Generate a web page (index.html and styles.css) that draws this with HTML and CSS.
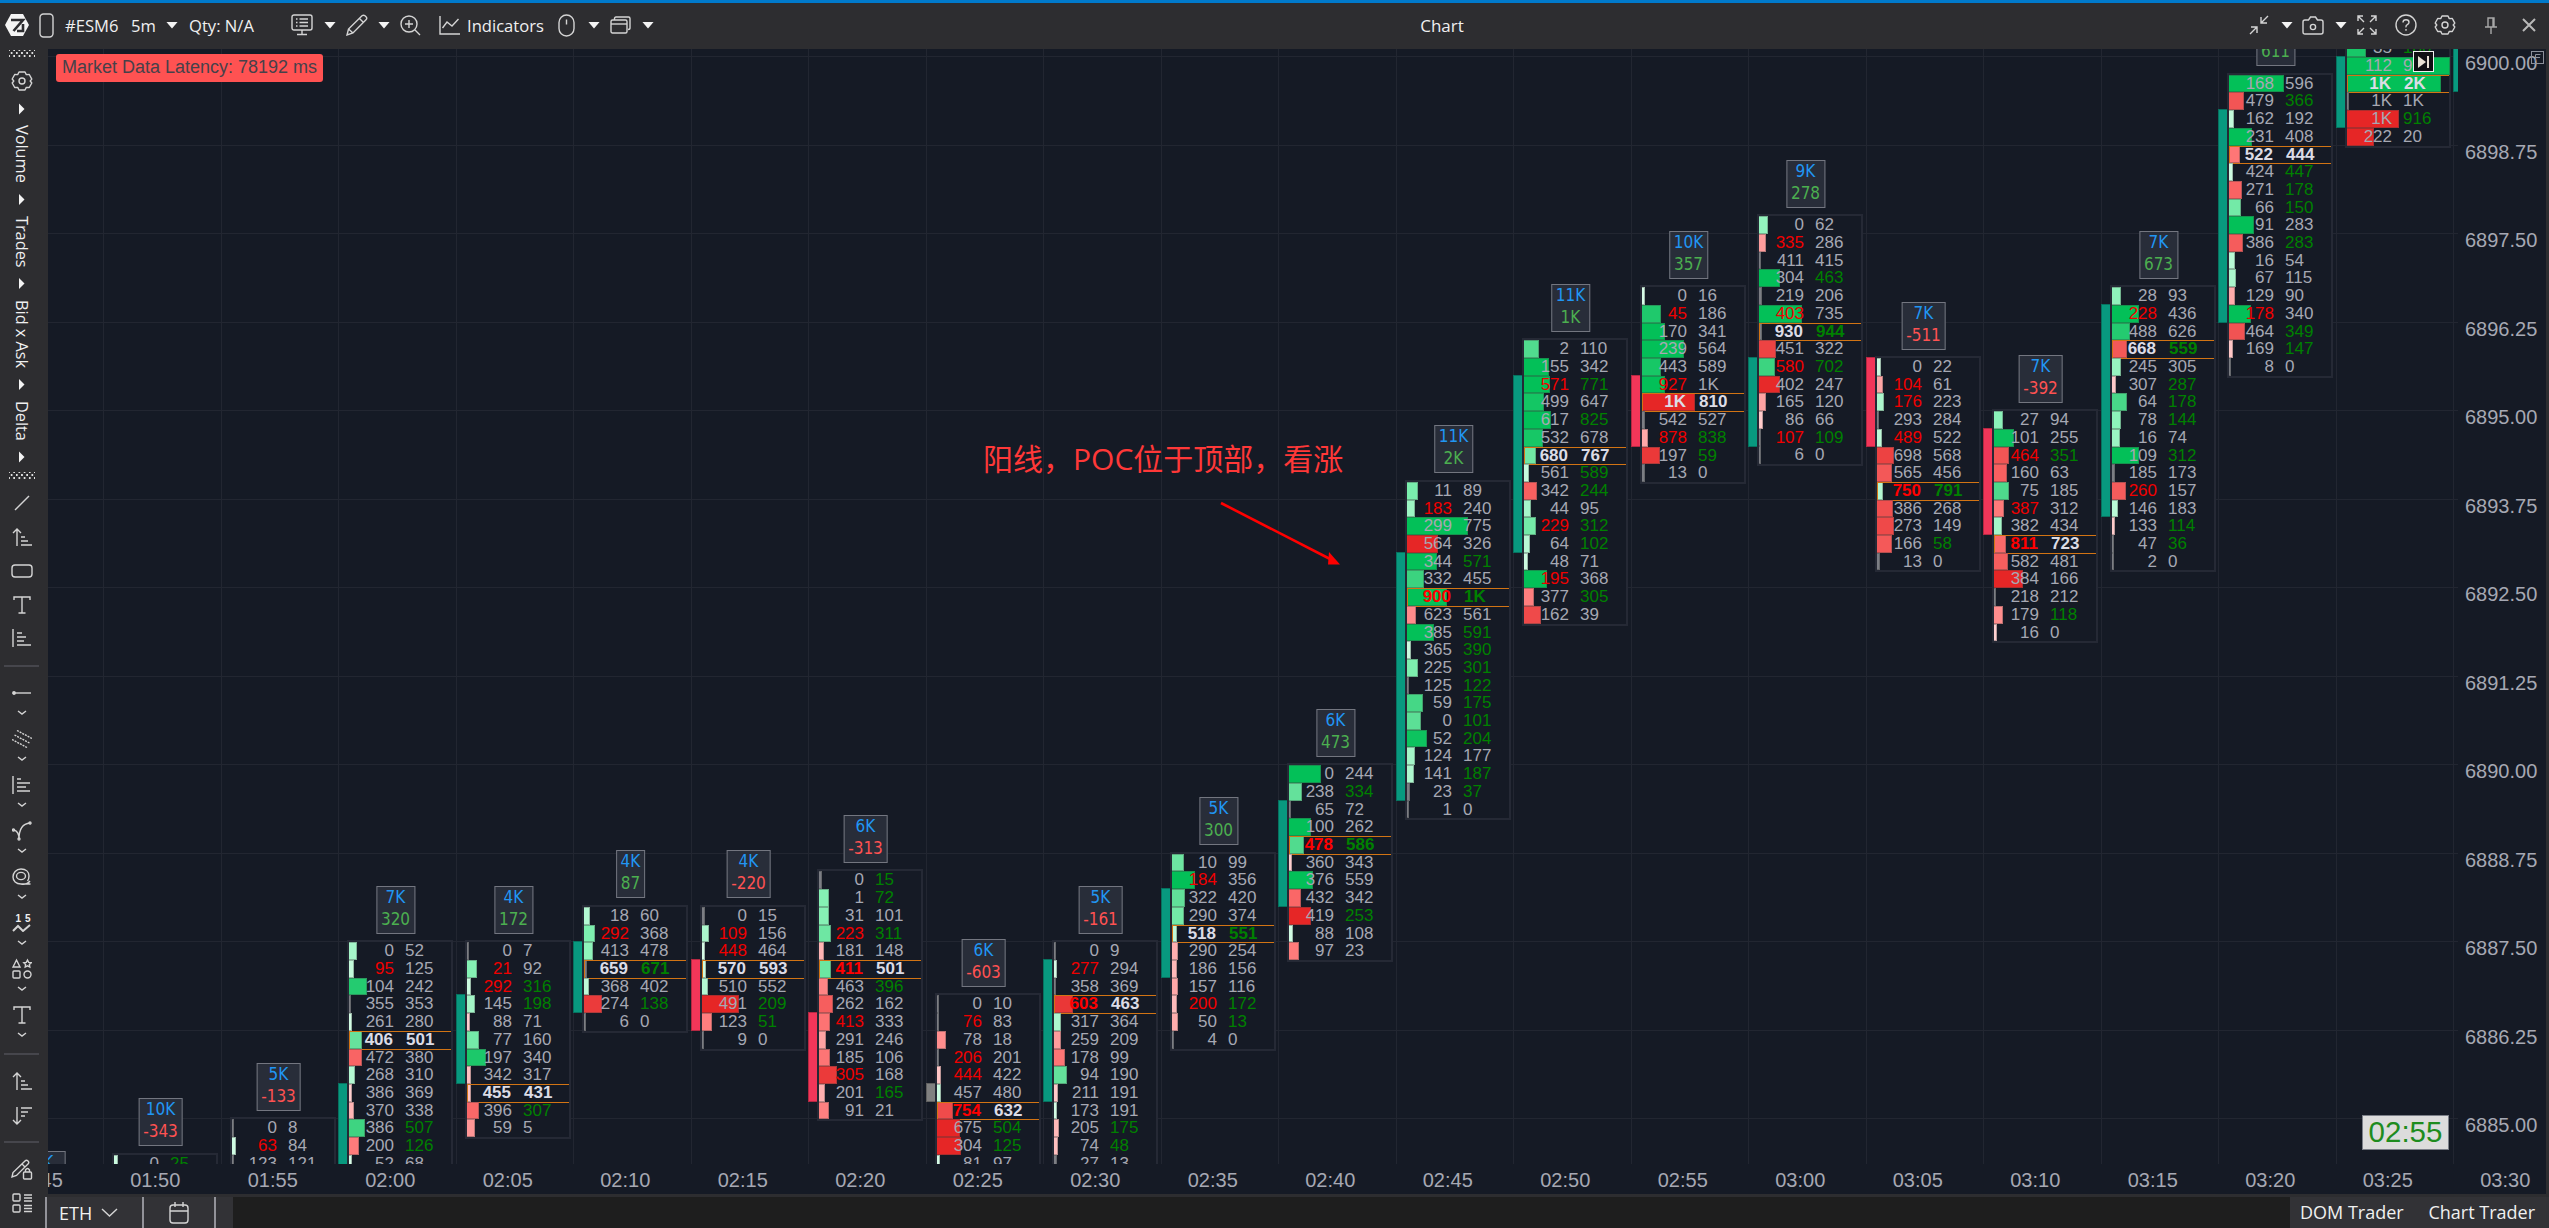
FILE: index.html
```html
<!DOCTYPE html>
<html lang="en">
<head>
  <meta charset="UTF-8">
  <meta name="viewport" content="width=device-width, initial-scale=1.0">
  <title>Chart</title>
  <link rel="stylesheet" href="styles.css">
</head>
<body>
  <!-- Top toolbar -->
  <header class="toolbar">
    <div class="toolbar-left">
      <svg class="logo" width="24" height="24" viewBox="0 0 24 24"><path d="M6 1h12l6 11-6 11H6L0 12z" fill="#f4f4f4"/><path d="M6 7h12L8.500 18M12 18h6v-7" fill="none" stroke="#2d2d30" stroke-width="2.600"/></svg>
      <svg class="phone" width="15" height="25" viewBox="0 0 15 25"><rect x="1" y="1" width="13" height="23" rx="3.500"/></svg>
      <span class="symbol">#ESM6</span>
      <span class="period">5m</span>
      <i class="caret"></i>
      <span class="qty">Qty: N/A</span>
      <svg class="monitor" width="22" height="22" viewBox="0 0 22 22"><rect x="1" y="1" width="20" height="15" rx="2"/><path d="M11 16v4M6 20.500h10M5 5h1.500M5 8.500h1.500M5 12h1.500M8.500 5H17M8.500 8.500H17M8.500 12H17"/></svg>
      <i class="caret"></i>
      <svg class="pencil" width="22" height="22" viewBox="0 0 22 22"><path d="M1 21l1.500-6L16 1.800q1.500-1.300 3 0l1 1q1.500 1.500 0 3L7 19zM13.500 4.500l4 4M2.500 15l4.500 4"/></svg>
      <i class="caret"></i>
      <svg class="lens" width="21" height="21" viewBox="0 0 21 21"><circle cx="9" cy="9" r="8"/><path d="M15 15l5 5M9 5v8M5 9h8"/></svg>
      <svg class="ind" width="21" height="20" viewBox="0 0 21 20"><path d="M1 1v18h20M3.500 13l4.500-6 5 4 6.500-7"/></svg>
      <span class="indicators">Indicators</span>
      <svg class="mouse" width="17" height="23" viewBox="0 0 17 23"><rect x="1" y="1" width="15" height="21" rx="7.500"/><path d="M8.500 5.500v5"/></svg>
      <i class="caret"></i>
      <svg class="windows" width="21" height="18" viewBox="0 0 21 18"><path d="M4.500 4V2.500Q4.500 1 6 1h12.500Q20 1 20 2.500V12q0 1.500-2 1.500"/><rect x="1" y="4" width="16" height="13" rx="1.500"/><path d="M1 8h16"/></svg>
      <i class="caret"></i>
    </div>
    <h1 class="title">Chart</h1>
    <div class="toolbar-right">
      <svg class="shrink" width="20" height="20" viewBox="0 0 20 20"><path d="M19 1l-7 7M12 2v6h6M1 19l7-7M2 12h6v6"/></svg>
      <i class="caret"></i>
      <svg class="camera" width="22" height="19" viewBox="0 0 22 19"><path d="M3 4h3.500L8.500 1h5l2 3H19q2 0 2 2v10q0 2-2 2H3q-2 0-2-2V6q0-2 2-2z"/><circle cx="11" cy="11" r="2.600"/></svg>
      <i class="caret"></i>
      <svg class="expand" width="20" height="20" viewBox="0 0 20 20"><path d="M1 6V1h5M1 1l6 6M14 1h5v5M19 1l-6 6M1 14v5h5M1 19l6-6M14 19h5v-5M19 19l-6-6"/></svg>
      <svg class="help" width="22" height="22" viewBox="0 0 22 22"><circle cx="11" cy="11" r="10"/><path d="M8 8.500Q8 5.800 11 5.800t3 2.500q0 1.500-1.700 2.400T11 13.300M11 15v1.800"/></svg>
      <svg class="gear" width="22" height="22" viewBox="0 0 22 22"><path d="M8 2h6l1.300 2.600 3-.1 2.500 4.600L19.200 11l1.600 2-2.500 4.500-3-.1L14 20H8l-1.300-2.600-3 .1L1.200 13l1.600-2-1.600-2 2.500-4.500 3 .1z" stroke-linejoin="round"/><circle cx="11" cy="11" r="3"/></svg>
      <svg class="pin" width="12" height="17" viewBox="0 0 12 17"><path d="M3 1h6v9H3zM0 10h12M6 10v7M8 1v9"/></svg>
      <svg class="close" width="14" height="14" viewBox="0 0 14 14"><path d="M1 1l12 12M13 1L1 13"/></svg>
    </div>
  </header>

  <div class="workspace">
    <!-- Drawing tools -->
    <nav class="sidebar">
      <div class="slot dots"><span class="dot-grid"></span></div>
      <div class="slot cog"><svg width="22" height="22" viewBox="0 0 22 22"><path d="M8 2h6l1.300 2.600 3-.1 2.500 4.600L19.200 11l1.600 2-2.500 4.500-3-.1L14 20H8l-1.300-2.600-3 .1L1.200 13l1.600-2-1.600-2 2.500-4.500 3 .1z" stroke-linejoin="round"/><circle cx="11" cy="11" r="3"/></svg></div>
      <div class="modes">
        <i class="tri"></i><span>Volume</span>
        <i class="tri"></i><span>Trades</span>
        <i class="tri"></i><span>Bid x Ask</span>
        <i class="tri"></i><span>Delta</span>
        <i class="tri"></i>
      </div>
      <div class="slot dots-low"><span class="dot-grid"></span></div>
      <div class="slot t-line"><svg width="16" height="16" viewBox="0 0 16 16"><path d="M1 15L15 1"/></svg></div>
      <div class="slot t-up"><svg width="20" height="19" viewBox="0 0 20 19"><path d="M5 18V1M1 5l4-4 4 4M9 9h4M9 13h7M9 17h11"/></svg></div>
      <div class="slot t-rect"><svg width="22" height="14" viewBox="0 0 22 14"><rect x="1" y="1" width="20" height="12" rx="3"/></svg></div>
      <div class="slot t-text"><svg width="18" height="18" viewBox="0 0 18 18"><path d="M1 4V1h16v3M9 1v16M5.500 17h7"/></svg></div>
      <div class="slot t-list"><svg width="19" height="18" viewBox="0 0 19 18"><path d="M1 0v18M5 4h5M5 8h9M5 12h7M5 16h14"/></svg></div>
      <hr class="sep">
      <div class="tool"><svg width="20" height="6" viewBox="0 0 20 6"><circle cx="2" cy="3" r="1.200" fill="#ddd"/><path d="M2 3h17"/></svg><svg class="chev" width="10" height="5" viewBox="0 0 10 5"><path d="M1 1l4 3 4-3"/></svg></div>
      <div class="tool"><svg width="20" height="19" viewBox="0 0 20 19"><path d="M5 1l15 8M2.500 5.500l15 8M0 10l15 8" stroke-dasharray="2 1"/></svg><svg class="chev" width="10" height="5" viewBox="0 0 10 5"><path d="M1 1l4 3 4-3"/></svg></div>
      <div class="tool"><svg width="19" height="20" viewBox="0 0 19 20"><path d="M1 1v18M5 4h4M5 8h13M5 12h9M5 16h13"/></svg><svg class="chev" width="10" height="5" viewBox="0 0 10 5"><path d="M1 1l4 3 4-3"/></svg></div>
      <div class="tool"><svg width="20" height="20" viewBox="0 0 20 20"><path d="M1.500 9Q7 10 7 18 7 3 18 2"/><circle cx="1.500" cy="9" r="1"/><circle cx="7" cy="18" r="1"/><circle cx="18" cy="2" r="1"/></svg><svg class="chev" width="10" height="5" viewBox="0 0 10 5"><path d="M1 1l4 3 4-3"/></svg></div>
      <div class="tool"><svg width="19" height="18" viewBox="0 0 19 18"><ellipse cx="9" cy="8" rx="4.500" ry="3.600"/><path d="M9 16C4 16 1 13 1 9s3-8 8-8 8 3 8 7q0 3-1.500 5M9 16h9.500M18 13q-3 4-9 3"/></svg><svg class="chev" width="10" height="5" viewBox="0 0 10 5"><path d="M1 1l4 3 4-3"/></svg></div>
      <div class="tool"><div class="wave"><span>1</span><span>5</span><svg width="19" height="8" viewBox="0 0 19 8"><path d="M1 7l5-5 5 5 3.500-3L18 1" stroke-width="2"/></svg></div><svg class="chev" width="10" height="5" viewBox="0 0 10 5"><path d="M1 1l4 3 4-3"/></svg></div>
      <div class="tool"><svg width="20" height="20" viewBox="0 0 20 20"><path d="M4.500 1L8 8H1zM15.500 1l1.200 2.400 2.500.3-1.800 1.800.4 2.500-2.300-1.200L13.200 8l.4-2.500-1.800-1.800 2.500-.3z"/><rect x="1" y="12" width="7" height="7" rx="1"/><circle cx="15.500" cy="15.500" r="3.500"/></svg><svg class="chev" width="10" height="5" viewBox="0 0 10 5"><path d="M1 1l4 3 4-3"/></svg></div>
      <div class="tool"><svg width="18" height="18" viewBox="0 0 18 18"><path d="M1 4V1h16v3M9 1v16M5.500 17h7"/></svg><svg class="chev" width="10" height="5" viewBox="0 0 10 5"><path d="M1 1l4 3 4-3"/></svg></div>
      <hr class="sep sep-mid">
      <div class="slot t-asc"><svg width="20" height="19" viewBox="0 0 20 19"><path d="M5 18V1M1 5l4-4 4 4M9 9h4M9 13h7M9 17h11"/></svg></div>
      <div class="slot t-desc"><svg width="20" height="19" viewBox="0 0 20 19"><path d="M5 1v17M1 14l4 4 4-4M9 2h11M9 6h7M9 10h4"/></svg></div>
      <hr class="sep sep-low">
      <div class="slot t-lock"><svg width="22" height="21" viewBox="0 0 22 21"><path d="M1 18l1-4.500L14 2q1.500-1.500 3 0t0 3L5.500 16.500zM11 5l3 3"/><rect x="12.500" y="13" width="8" height="7" rx="1"/><path d="M14.500 13v-2q2-3 4 0v2"/></svg></div>
      <div class="slot t-grid"><svg width="20" height="20" viewBox="0 0 20 20"><rect x="1" y="1" width="7" height="7" rx="1"/><rect x="1" y="12" width="7" height="7" rx="1"/><path d="M12 2h8M12 5h8M12 8h8M12 12.500h8M12 15.500h8M12 18.500h8"/></svg></div>
    </nav>

    <!-- Cluster chart -->
    <main class="chart">
      <div class="chart-row">
        <div class="plot" id="plot">
          <div class="latency">Market Data Latency: 78192 ms</div>
          <div class="note">阳线，POC位于顶部，看涨</div>
          <svg class="arrow" width="122" height="68" viewBox="0 0 122 68"><path d="M2 3l111 57" stroke="#f00" stroke-width="2.600"/><path d="M110 52l11 12.500H109z" fill="#f00" stroke="none"/></svg>
          <div class="to-end"><svg width="13" height="12" viewBox="0 0 13 12"><path d="M1 0l8 6-8 6z" fill="#e8e0d4" stroke="none"/><path d="M11 0v12" stroke="#e8e0d4" stroke-width="2"/></svg></div>
          <div class="timer">02:55</div>
        </div>
        <div class="price-axis" id="priceAxis"></div>
        <svg class="fix-scale" width="13" height="13" viewBox="0 0 13 13"><rect x=".5" y=".5" width="12" height="12"/><path d="M4.500 10V3.500h5M4.500 6.500H9"/></svg>
      </div>
      <div class="time-axis" id="timeAxis"></div>
    </main>
  </div>

  <!-- Bottom bar -->
  <footer class="bottombar">
    <div class="session">ETH <svg width="17" height="9" viewBox="0 0 17 9"><path d="M1 1l7.500 7L16 1"/></svg></div>
    <div class="calendar"><svg width="20" height="22" viewBox="0 0 20 22"><rect x="1" y="3" width="18" height="18" rx="3"/><path d="M1 9h18M6 0v5M14 0v5"/></svg></div>
    <div class="filler"></div>
    <div class="traders"><span>DOM Trader</span><span>Chart Trader</span></div>
  </footer>

  <script src="chart.js"></script>
</body>
</html>
```
FILE: styles.css
```css
/* Base */
* {
  box-sizing: border-box;
}

body {
  margin: 0;
  width: 2549px;
  height: 1228px;
  overflow: hidden;
  display: flex;
  flex-direction: column;
  position: relative;
  background: #2d2d30;
  color: #f0f0f0;
  font-family: "Open Sans", "Noto Sans", sans-serif;
  font-size: 16.6px;
}

svg {
  display: block;
  flex: none;
  fill: none;
  stroke: #d4d4d4;
  stroke-width: 1.4;
}

/* Top toolbar */
.toolbar {
  height: 49px;
  flex: none;
  border-top: 3px solid #007acc;
  padding-bottom: 2px;
  display: flex;
  align-items: center;
  white-space: nowrap;
}

.toolbar-left,
.toolbar-right {
  display: flex;
  align-items: center;
}

.toolbar-left {
  width: 900px;
  padding-left: 5px;
}

.toolbar-right {
  margin-left: auto;
  padding-right: 13px;
}

.title {
  margin: 0 0 0 512px;
  font-size: 17px;
  font-weight: 400;
  width: 60px;
  text-align: center;
}

.caret {
  flex: none;
  width: 12px;
  height: 7px;
  background: #f4f4f4;
  clip-path: polygon(0 0, 100% 0, 50% 100%);
}

.logo { stroke: none; }
.phone { margin-left: 10px; }
.symbol { margin-left: 11px; width: 66px; }
.period { width: 35px; }
.qty { margin-left: 11px; width: 102px; }
.monitor + .caret { margin-left: 11px; }
.pencil { margin-left: 10px; }
.pencil + .caret { margin-left: 10px; }
.lens { margin-left: 10px; }
.ind { margin-left: 18px; }
.indicators { margin-left: 7px; width: 91px; }
.mouse + .caret { margin-left: 13px; }
.windows { margin-left: 10px; }
.windows + .caret { margin-left: 11px; }

.shrink + .caret { margin-left: 12px; }
.camera { margin-left: 9px; }
.camera + .caret { margin-left: 11px; }
.expand { margin-left: 10px; }
.help { margin-left: 18px; }
.gear { margin-left: 17px; }
.pin { margin-left: 29px; stroke: #a8a8a8; }
.close { margin-left: 25px; stroke: #b8b8b8; stroke-width: 2; }

/* Workspace */
.workspace {
  display: flex;
  height: 1179px;
  flex: none;
}

.sidebar {
  width: 48px;
  flex: none;
  padding-right: 5px;
  display: flex;
  flex-direction: column;
  align-items: center;
}

.slot {
  flex: none;
  display: flex;
  align-items: center;
  justify-content: center;
}

.dots { height: 10px; }
.cog { height: 43px; }
.dots-low { height: 24px; }
.t-line { height: 29px; }
.t-up { height: 40px; }
.t-rect { height: 28px; }
.t-text { height: 40px; }
.t-list { height: 26px; }
.t-asc { height: 42px; }
.t-desc { height: 26px; }
.t-lock { height: 27px; }
.t-grid { height: 40px; }

.dot-grid {
  width: 26px;
  height: 8px;
  background:
    radial-gradient(circle, #e0e0e0 0.9px, transparent 1.2px) 0 0 / 5.2px 6px,
    radial-gradient(circle, #e0e0e0 0.9px, transparent 1.2px) 2.6px 3px / 5.2px 6px;
}

.modes {
  height: 362px;
  flex: none;
  writing-mode: vertical-rl;
  display: flex;
  align-items: center;
  justify-content: space-between;
  padding: 1px 0;
  line-height: 20px;
  font-size: 16.3px;
}

.tri {
  width: 6px;
  height: 12px;
  background: #f4f4f4;
  clip-path: polygon(0 0, 100% 50%, 0 100%);
}

.sep {
  flex: none;
  width: 35px;
  height: 2px;
  margin: 14px 0 13px;
  border: 0;
  background: #46464c;
}

.sep-mid { margin: 5px 0; }
.sep-low { margin: 13px 0; }

.tool {
  height: 46px;
  flex: none;
  display: flex;
  flex-direction: column;
  align-items: center;
}

.tool > :first-child {
  height: 26px;
}

.tool .chev {
  margin-top: 4px;
}

.wave {
  width: 20px;
  display: flex;
  flex-wrap: wrap;
  justify-content: space-between;
  align-content: center;
  padding: 0 1px 0 4px;
  font: bold 10px/9px "Liberation Sans", sans-serif;
}

.wave svg {
  margin: 1px 0 0 -4px;
}

/* Chart */
.chart {
  width: 2498px;
  height: 1145px;
  background: #151a25;
  font-family: "Liberation Sans", Arial, sans-serif;
  color: #a6a8b3;
}

.chart-row {
  display: flex;
  position: relative;
  height: 1115px;
}

.plot {
  position: relative;
  width: 2410px;
  height: 1115px;
  overflow: hidden;
  flex: none;
}

.grid-x,
.grid-y {
  position: absolute;
  background: #222631;
}

.grid-x { top: 0; width: 1px; height: 100%; }
.grid-y { left: 0; height: 1px; width: 100%; }

/* Open/close body beside each cluster */
.body {
  position: absolute;
  width: 10px;
  border: 1px solid rgba(0, 0, 0, 0.25);
}

.body.up { background: #08997f; }
.body.down { background: #f23659; }
.body.flat { background: #808080; }

/* Cluster of price rows */
.cluster {
  position: absolute;
  width: 106px;
  border: 2px solid #252935;
  background: #151a25;
  font-size: 17px;
}

.row {
  position: relative;
  height: 17.706px;
  line-height: 18.5px;
  display: flex;
  white-space: nowrap;
}

.bar {
  position: absolute;
  left: 0;
  top: 0;
  height: 100%;
  border: 1px solid rgba(60, 60, 60, 0.35);
  border-left: 0;
}

.bid,
.ask {
  position: relative;
}

.bid { width: 45px; display: flex; justify-content: flex-end; }
.ask { margin-left: 11px; }

.sell { color: #f00000; }
.buy { color: #008000; }

.row.poc {
  font-weight: bold;
  color: #dcdce6;
}

.row.poc::after {
  content: "";
  position: absolute;
  inset: 0 0 -1px 0;
  border: 1px solid #d27414;
  border-right: 0;
}

.poc .bid { width: 44px; }
.poc .ask { margin-left: 13px; }
.poc .sell { color: #ff0000; }

/* Volume / delta label above the cluster */
.label {
  position: absolute;
  height: 48px;
  transform: translateX(-50%);
  padding: 0 4px;
  border: 1px solid #737680;
  background: #282d39;
  text-align: center;
  font: 17px/20px "DejaVu Sans Condensed", "DejaVu Sans", sans-serif;
  font-stretch: condensed;
}

.label div:first-child { color: #2196f3; height: 22px; }
.label .plus { color: #4caf50; }
.label .minus { color: #ff5252; }

.latency {
  position: absolute;
  z-index: 2;
  left: 8px;
  top: 5px;
  width: 267px;
  height: 28px;
  border-radius: 3px;
  background: #ff5252;
  color: #46414a;
  text-align: center;
  font-size: 18px;
  line-height: 27px;
  white-space: nowrap;
}

.note {
  position: absolute;
  z-index: 2;
  left: 935px;
  top: 388px;
  color: #ff3838;
  font: 400 30px/44px "Open Sans", "Noto Sans CJK SC", sans-serif;
  white-space: nowrap;
}

.arrow {
  position: absolute;
  z-index: 2;
  left: 1171px;
  top: 451px;
}

.to-end {
  position: absolute;
  z-index: 2;
  left: 2365px;
  top: 2px;
  width: 21px;
  height: 21px;
  border: 1px solid #f0f0f0;
  background: #101014;
  display: flex;
  align-items: center;
  justify-content: center;
}

.timer {
  position: absolute;
  z-index: 2;
  left: 2314px;
  top: 1066px;
  width: 87px;
  height: 35px;
  border: 1px solid #7b7f88;
  background: #dcdcdc;
  color: #1e8c1e;
  text-align: center;
  font-size: 29.5px;
  line-height: 32px;
}

.price-axis {
  padding: 3px 0 0 7px;
  font-size: 20px;
}

.price-axis div {
  height: 88.53px;
  line-height: 22px;
}

.fix-scale {
  position: absolute;
  left: 2483px;
  top: 2px;
  stroke: #8c909a;
  stroke-width: 1;
}

.time-axis {
  height: 30px;
  overflow: hidden;
  display: flex;
  font-size: 20px;
  line-height: 33px;
  padding: 0;
}

.time-axis div {
  flex: none;
  width: 117.5px;
  text-align: center;
}

.time-axis div:first-child {
  margin-left: -69px;
}

/* Bottom bar */
.bottombar {
  position: absolute;
  left: 45px;
  right: 0;
  bottom: 0;
  height: 31px;
  display: flex;
  background: #323236;
  font-size: 18px;
  line-height: 30px;
}

.session,
.calendar {
  display: flex;
  align-items: center;
  border-left: 2px solid #929299;
}

.session {
  width: 97px;
  padding-left: 12px;
  gap: 9px;
}

.calendar {
  width: 74px;
  justify-content: center;
  border-right: 2px solid #929299;
}

.filler {
  flex: 1;
  margin-left: 17px;
  background: #1e1e1e;
}

.traders {
  width: 259px;
  padding: 0 14px 0 10px;
  display: flex;
  justify-content: space-between;
  white-space: nowrap;
}
```
FILE: chart.js
```js
const STEP_X = 117.5;   // candle spacing
const STEP_Y = 17.706;  // one tick
const X0 = 55.5;        // 01:50 candle
const Y0 = 7;           // 6900.00
const PX_PER_DELTA = 7.9;

// rows: "bid ask", r = sell imbalance, g = buy imbalance, * = POC, =n overrides the delta
const candles = [
  { i: -1, top: 65, label: ["5K", "-203"], rows: [] },
  { i: 0, top: 62, label: ["10K", "-343"], rows: ["0 25g", "18 32"] },
  { i: 1, top: 60, label: ["5K", "-133"], rows: ["0 8", "63r 84", "123 121"] },
  { i: 2, top: 50, label: ["7K", "320"], body: ["up", 58, 64], rows: ["0 52", "95r 125", "104 242", "355 353", "261 280", "*406 501", "472 380", "268 310", "386 369", "370 338", "386 507g", "200 126g", "52 68", "40 44"] },
  { i: 3, top: 50, label: ["4K", "172"], body: ["up", 53, 58], rows: ["0 7", "21r 92", "292r 316g", "145 198g", "88 71", "77 160", "197 340", "342 317", "*455 431", "396 307g", "59 5"] },
  { i: 4, top: 48, label: ["4K", "87"], body: ["up", 50, 54], rows: ["18 60", "292r 368", "413 478", "*659 671g", "368 402", "274 138g", "6 0"] },
  { i: 5, top: 48, label: ["4K", "-220"], body: ["down", 51, 55], rows: ["0 15", "109r 156", "448r 464", "*570 593", "510 552", "491 209g", "123 51g", "9 0"] },
  { i: 6, top: 46, label: ["6K", "-313"], body: ["down", 54, 59], rows: ["0 15g", "1 72g", "31 101", "223r 311g", "181 148", "*411r 501", "463 396g", "262 162", "413r 333", "291 246", "185 106", "305r 168", "201 165g", "91 21"] },
  { i: 7, top: 53, label: ["6K", "-603"], body: ["flat", 58, 59], rows: ["0 10", "76r 83", "78 18", "206r 201", "444r 422", "457 480", "*754r 632", "675 504g", "304 125g", "81 97", "40 42"] },
  { i: 8, top: 50, label: ["5K", "-161"], body: ["up", 51, 59], rows: ["0 9", "277r 294", "358 369", "*603r 463", "317 364", "259 209", "178 99", "94 190", "211 191", "173 191", "205 175g", "74 48g", "27 13", "8 8"] },
  { i: 9, top: 45, label: ["5K", "300"], body: ["up", 47, 52], rows: ["10 99", "184r 356", "322 420", "290 374", "*518 551g", "290 254", "186 156", "157 116", "200r 172g", "50 13g", "4 0"] },
  { i: 10, top: 40, label: ["6K", "473"], body: ["up", 42, 48], rows: ["0 244", "238 334g", "65 72", "100 262", "*478r 586g", "360 343", "376 559", "432 342", "419 253g", "88 108", "97 23"] },
  { i: 11, top: 24, label: ["11K", "2K"], body: ["up", 28, 42], rows: ["11 89", "183r 240", "299 775", "564 326", "344 571g", "332 455", "*900r 1Kg =310", "623 561", "385 591g", "365 390g", "225 301g", "125 122g", "59 175g", "0 101g", "52 204g", "124 177", "141 187g", "23 37g", "1 0"] },
  { i: 12, top: 16, label: ["11K", "1K"], body: ["up", 18, 28], rows: ["2 110", "155 342", "571r 771g", "499 647", "617 825g", "532 678", "*680 767", "561 589g", "342 244g", "44 95", "229r 312g", "64 102g", "48 71", "195r 368", "377 305g", "162 39"] },
  { i: 13, top: 13, label: ["10K", "357"], body: ["down", 18, 22], rows: ["0 16", "45r 186", "170 341", "239 564", "443 589", "927r 1K =174", "*1K 810 =-408", "542 527", "878r 838g", "197 59g", "13 0"] },
  { i: 14, top: 9, label: ["9K", "278"], body: ["up", 17, 22], rows: ["0 62", "335r 286", "411 415", "304 463g", "219 206", "403r 735", "*930 944g", "451 322", "580r 702g", "402 247", "165 120", "86 66", "107r 109g", "6 0"] },
  { i: 15, top: 17, label: ["7K", "-511"], body: ["down", 17, 22], rows: ["0 22", "104r 61", "176r 223", "293 284", "489r 522", "698 568", "565 456", "*750r 791g", "386 268", "273 149", "166 58g", "13 0"] },
  { i: 16, top: 20, label: ["7K", "-392"], body: ["down", 21, 27], rows: ["27 94", "101 255", "464r 351g", "160 63", "75 185", "387r 312", "382 434", "*811r 723", "582 481", "384 166", "218 212", "179 118g", "16 0"] },
  { i: 17, top: 13, label: ["7K", "673"], body: ["up", 14, 26], rows: ["28 93", "228r 436", "488 626", "*668 559g", "245 305", "307 287g", "64 178g", "78 144g", "16 74", "109 312g", "185 173", "260r 157", "146 183", "133 114g", "47 36g", "2 0"] },
  { i: 18, top: 1, label: ["", "611"], body: ["up", 3, 15], rows: ["168 596", "479 366g", "162 192", "231 408", "*522 444", "424 447g", "271 178g", "66 150g", "91 283", "386 283g", "16 54", "67 115", "129 90", "178r 340", "464 349g", "169 147g", "8 0"] },
  { i: 19, top: -1, body: ["up", 0, 4], rows: ["35 180g", "112 915", "*1K 2K =732", "1K 1K =2", "1K 916g =-400", "222 20"] },
  { i: 20, top: 0, body: ["up", -1, 2], rows: [] }
];

const GREEN = [[0, 235, 255, 244], [50, 168, 247, 203], [75, 126, 240, 176], [95, 102, 226, 156], [112, 75, 217, 138], [138, 36, 203, 112], [158, 3, 192, 88]];
const RED = [[0, 255, 238, 238], [32, 255, 180, 180], [74, 255, 123, 123], [92, 249, 100, 100], [113, 242, 85, 85], [136, 235, 59, 59], [158, 230, 38, 38]];

function barColor(delta) {
  const stops = delta >= 0 ? GREEN : RED;
  const d = Math.abs(delta);
  for (let n = 1; n < stops.length; n++) {
    const a = stops[n - 1], b = stops[n];
    if (d <= b[0]) {
      const t = (d - a[0]) / (b[0] - a[0]);
      return "rgb(" + [1, 2, 3].map(c => Math.round(a[c] + (b[c] - a[c]) * t)).join(",") + ")";
    }
  }
  return "rgb(" + stops[stops.length - 1].slice(1).join(",") + ")";
}

const plot = document.getElementById("plot");

function add(parent, cls, style, text) {
  const el = document.createElement("div");
  if (cls) el.className = cls;
  Object.assign(el.style, style || {});
  if (text) el.textContent = text;
  parent.appendChild(el);
  return el;
}

// Grid
for (let n = 0; n <= 20; n++) add(plot, "grid-x", { left: Math.floor(X0 + n * STEP_X) + "px" });
for (let n = 0; n <= 12; n++) add(plot, "grid-y", { top: Math.round(Y0 + n * 5 * STEP_Y) + "px" });

// Clusters
candles.forEach(c => {
  const x = Math.round(X0 + c.i * STEP_X - 0.5);
  const y = Y0 + c.top * STEP_Y;

  if (c.body) {
    const top = Math.round(Y0 + c.body[1] * STEP_Y);
    const end = Math.round(Y0 + c.body[2] * STEP_Y);
    add(plot, "body " + c.body[0], { left: x + "px", top: top + "px", height: end - top + 1 + "px" });
  }

  if (c.rows.length) {
    const box = add(plot, "cluster", { left: x + 9 + "px", top: y - 1 + "px" });
    c.rows.forEach(r => {
      const [bid, ask, fixed] = r.replace("*", "").split(" ");
      const delta = fixed ? parseInt(fixed.slice(1)) : parseInt(ask) - parseInt(bid);
      const width = Math.max(2, Math.round(Math.abs(delta) / PX_PER_DELTA) + 0.5);
      const row = add(box, r[0] === "*" ? "row poc" : "row");
      add(row, "bar", { width: width + "px", backgroundColor: Math.abs(delta) < 16 ? "#7c7e84" : barColor(delta) });
      add(row, bid.endsWith("r") ? "bid sell" : "bid", null, bid.replace("r", ""));
      add(row, ask.endsWith("g") ? "ask buy" : "ask", null, ask.replace("g", ""));
    });
  }

  if (c.label) {
    const label = add(plot, "label", { left: x + 57.5 + "px", top: Math.round(y - 55.5) + "px" });
    add(label, "", null, c.label[0]);
    add(label, c.label[1][0] === "-" ? "minus" : "plus", null, c.label[1]);
  }
});

// Axes
for (let n = 0; n <= 12; n++) {
  add(document.getElementById("priceAxis"), "", null, (6900 - n * 1.25).toFixed(2));
}
for (let n = 0; n <= 21; n++) {
  const m = 105 + n * 5;
  add(document.getElementById("timeAxis"), "", null, "0" + Math.floor(m / 60) + ":" + String(m % 60).padStart(2, "0"));
}
```
